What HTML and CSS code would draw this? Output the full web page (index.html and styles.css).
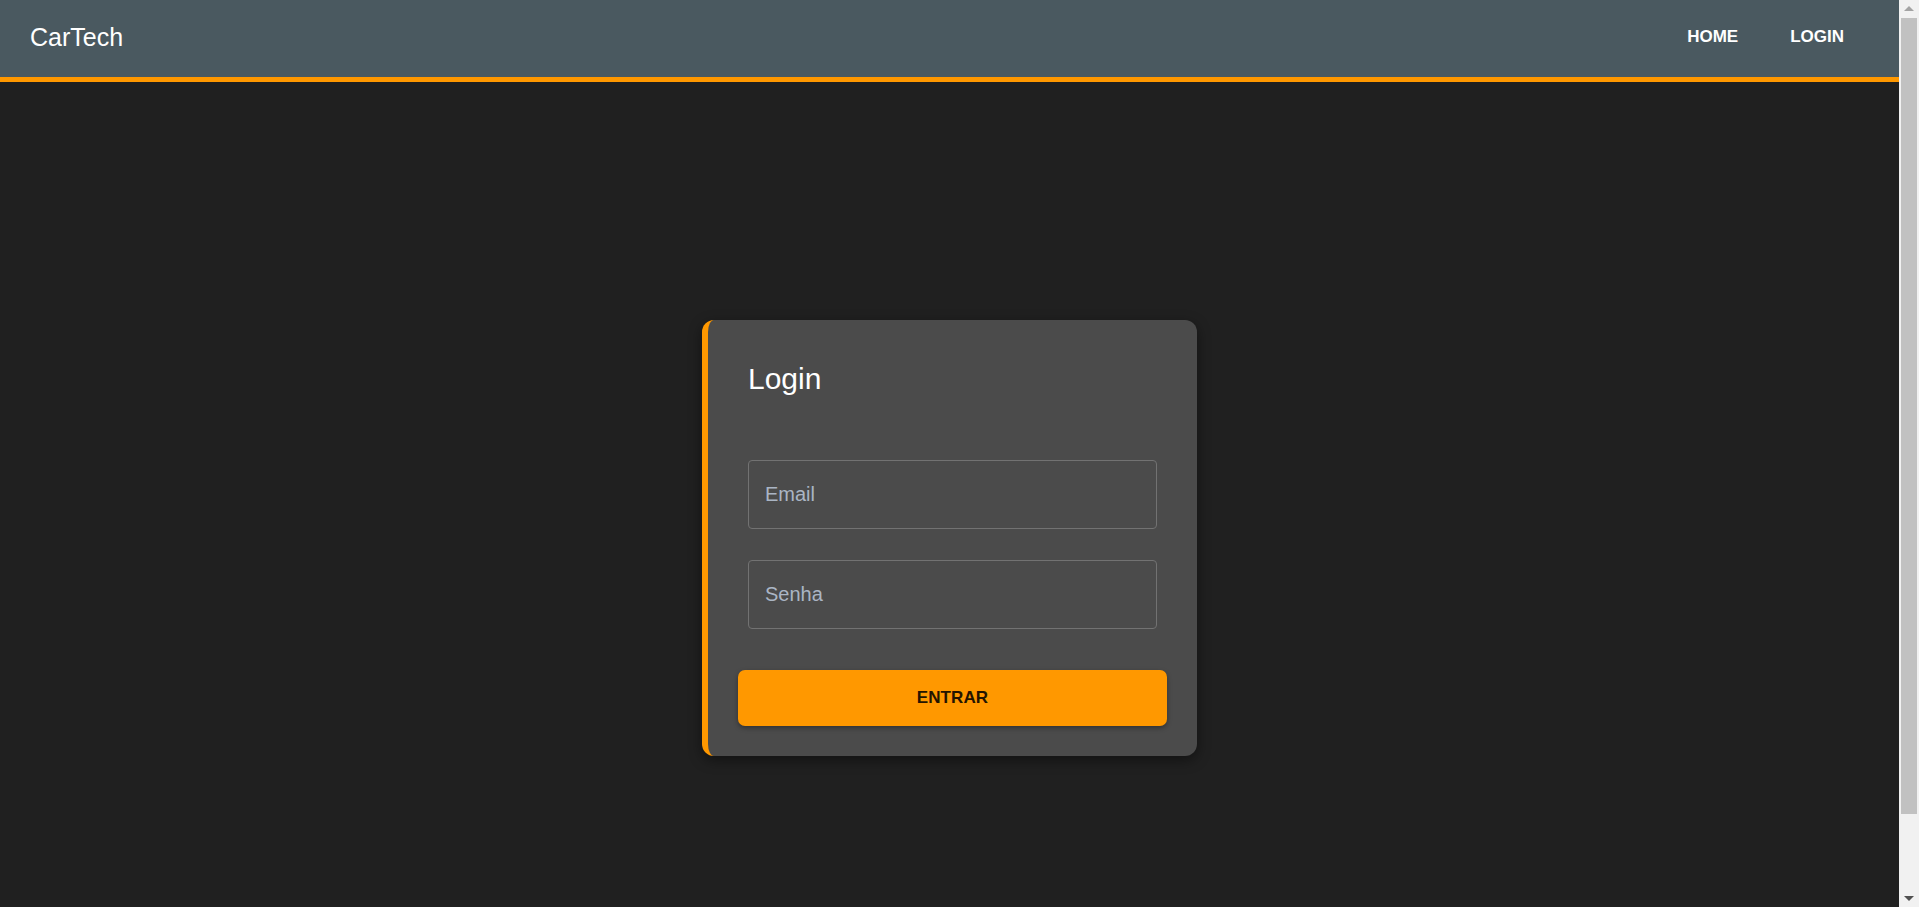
FILE: index.html
```html
<!DOCTYPE html>
<html lang="pt-BR">
<head>
<meta charset="utf-8">
<title>CarTech - Login</title>
<link rel="stylesheet" href="styles.css">
</head>
<body>
<div class="page">
  <header class="topbar">
    <a class="brand" href="#">CarTech</a>
    <nav class="nav">
      <a class="nav-link" href="#">HOME</a>
      <a class="nav-link" href="#">LOGIN</a>
    </nav>
  </header>
  <main class="main">
    <section class="card">
      <h2 class="card-title">Login</h2>
      <form class="form">
        <input class="field" type="email" placeholder="Email">
        <input class="field" type="password" placeholder="Senha">
        <button class="submit" type="button">ENTRAR</button>
      </form>
    </section>
  </main>
</div>
<div class="scrollbar" aria-hidden="true">
  <div class="sb-btn"><span class="sb-arrow sb-up"></span></div>
  <div class="sb-track"><div class="sb-thumb"></div></div>
  <div class="sb-btn"><span class="sb-arrow sb-down"></span></div>
</div>
</body>
</html>
```

FILE: styles.css
```css
* { box-sizing: border-box; }

html, body {
  margin: 0;
  padding: 0;
}

body {
  background: #202020;
  font-family: "Liberation Sans", Arial, sans-serif;
  color: #fff;
}

.page {
  margin-right: 20px;
}

.topbar {
  height: 82px;
  background: #4a5960;
  border-bottom: 5px solid #ff9800;
  display: flex;
  align-items: center;
  justify-content: space-between;
  padding: 0 55px 0 30px;
}

.brand {
  color: #fff;
  text-decoration: none;
  font-size: 25px;
  margin-top: -2px;
}

.nav {
  display: flex;
  gap: 52px;
  margin-top: -3px;
}

.nav-link {
  color: #fff;
  text-decoration: none;
  font-weight: bold;
  font-size: 17px;
}

.main {
  min-height: 100vh;
  display: flex;
  align-items: center;
  justify-content: center;
  padding-top: 5px;
}

.card {
  width: 495px;
  background: #4b4b4b;
  border-left: 6px solid #ff9800;
  border-radius: 12px;
  padding: 42px 30px 30px 30px;
  box-shadow: 0 4px 14px rgba(0, 0, 0, 0.45);
}

.card-title {
  margin: 0 10px;
  font-size: 30px;
  font-weight: normal;
  line-height: 33px;
  color: #fff;
}

.form {
  display: flex;
  flex-direction: column;
  margin-top: 65px;
}

.field {
  margin: 0 10px 31px;
  height: 69px;
  background: transparent;
  border: 1px solid #727272;
  border-radius: 4px;
  padding: 0 16px;
  font-family: "Liberation Sans", Arial, sans-serif;
  font-size: 20px;
  color: #fff;
  outline: none;
}

.field:last-of-type {
  margin-bottom: 41px;
}

.field::placeholder {
  color: #aab5c4;
}

.submit {
  height: 56px;
  border: none;
  border-radius: 7px;
  background: #ff9800;
  color: #241400;
  font-family: "Liberation Sans", Arial, sans-serif;
  font-weight: bold;
  font-size: 17px;
  letter-spacing: 0.1px;
  box-shadow: 0 2px 5px rgba(0, 0, 0, 0.35);
  cursor: pointer;
}

/* Browser scrollbar drawn over the right edge */
.scrollbar {
  position: fixed;
  top: 0;
  right: 0;
  width: 20px;
  height: 100vh;
  background: #f1f1f1;
  display: flex;
  flex-direction: column;
}

.sb-btn {
  height: 17px;
  flex: none;
  display: flex;
  align-items: center;
  justify-content: center;
}

.sb-arrow {
  width: 0;
  height: 0;
  border-left: 5px solid transparent;
  border-right: 5px solid transparent;
}

.sb-up {
  border-bottom: 5px solid #a3a3a3;
}

.sb-down {
  border-top: 5px solid #505050;
}

.sb-track {
  flex: 1;
  padding: 1px 2px 0;
}

.sb-thumb {
  height: 796px;
  background: #c1c1c1;
}
```
